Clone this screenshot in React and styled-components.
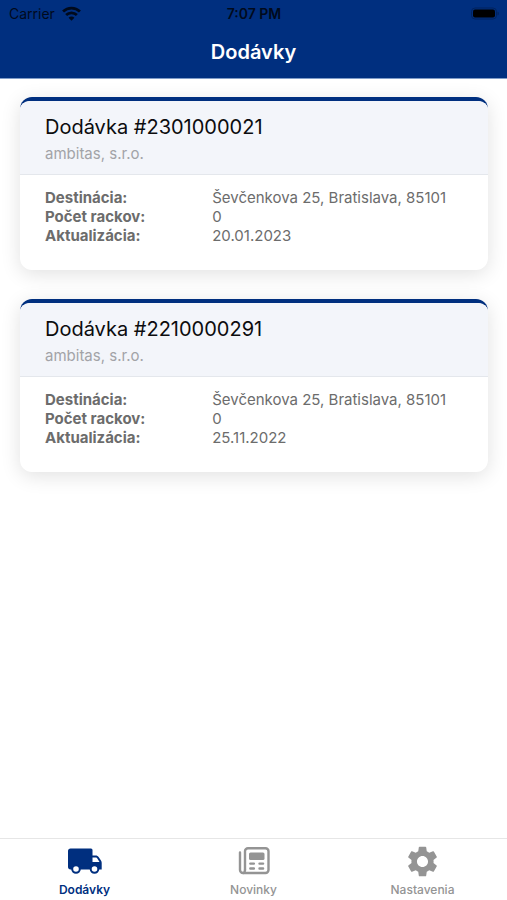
import styled, { createGlobalStyle } from "styled-components"
import { MdSettings } from "react-icons/md"


const GlobalStyle = createGlobalStyle`
    * {
        box-sizing: border-box;
    }
    body {
        margin: 0;
        background-color: #fff;
        font-family: Inter, "Liberation Sans", sans-serif;
    }
`

const Screen = styled.div`
    display: flex;
    flex-direction: column;
    min-height: 100vh;
`

const Header = styled.header`
    background-color: #002f7f;
    border-bottom: 1px solid #7f9cc8;
`

const StatusBar = styled.div`
    display: grid;
    grid-template-columns: 1fr auto 1fr;
    align-items: center;
    height: 27px;
    padding: 0 8px 0 9px;
    font-size: 14px;
    color: #000a1c;
`

const Carrier = styled.div`
    display: flex;
    align-items: center;
    gap: 7px;
`

const Clock = styled.div`
    font-weight: 600;
`

const Battery = styled.svg`
    justify-self: end;
`

const Title = styled.h1`
    margin: 0;
    line-height: 51px;
    text-align: center;
    font-size: 20px;
    font-weight: 600;
    color: #fff;
`

const Deliveries = styled.main`
    flex: 1;
    display: flex;
    flex-direction: column;
    gap: 29px;
    padding: 18px 19px 29px 20px;
`

const Card = styled.article`
    border-top: 4px solid #002f7f;
    border-radius: 12px;
    background-color: #fff;
    box-shadow: 0 4px 20px rgba(0, 0, 0, 0.12);
`

const CardHeader = styled.div`
    padding: 12px 25px 11px;
    border-bottom: 1px solid #e4e7ec;
    border-radius: 9px 9px 0 0;
    background-color: #f3f5fa;
`

const CardTitle = styled.h2`
    margin: 0;
    line-height: 28px;
    font-size: 20px;
    font-weight: 400;
    color: #0c0c0e;
`

const Company = styled.p`
    margin: 0;
    padding-top: 3px;
    line-height: 19px;
    font-size: 15px;
    color: #a2a3a7;
`

const Details = styled.dl`
    display: grid;
    grid-template-columns: 40% 1fr;
    margin: 0;
    padding: 13px 25px 25px;
    font-size: 15px;
    line-height: 19px;
    color: #6c6c6c;

    dt {
        font-weight: 700;
    }
    dd {
        margin: 0;
    }
`

const TabBar = styled.nav`
    position: sticky;
    bottom: 0;
    display: grid;
    grid-template-columns: repeat(3, 1fr);
    border-top: 1px solid #e6e6e6;
    background-color: #fff;
`

const Tab = styled.a`
    display: flex;
    flex-direction: column;
    align-items: center;
    gap: 4px;
    padding: 5px 0 2px;
    font-size: 12px;
    line-height: 16px;
    font-weight: ${props => props.$active ? 600 : 500};
    color: ${props => props.$active ? "#002f7f" : "#949494"};
    text-decoration: none;
`

const TabIcon = styled.span`
    display: flex;
    align-items: center;
    height: 34px;
`

const deliveries = [
    { number: "2301000021", company: "ambitas, s.r.o.", destination: "Ševčenkova 25, Bratislava, 85101", racks: 0, updated: "20.01.2023" },
    { number: "2210000291", company: "ambitas, s.r.o.", destination: "Ševčenkova 25, Bratislava, 85101", racks: 0, updated: "25.11.2022" },
]

function WifiIcon(){
    return (
        <svg width="19" height="15" viewBox="0 0 18 14" fill="none" stroke="currentColor" strokeWidth="2.6" aria-hidden="true">
            <path d="M1 5.2a11.4 11.4 0 0 1 16 0" />
            <path d="M3.9 8.5a7.2 7.2 0 0 1 10.2 0" />
            <path d="M9 13.9 6.2 11a3.8 3.8 0 0 1 5.600 0z" fill="currentColor" stroke="none" />
        </svg>
    )
}

function BatteryIcon(){
    return (
        <Battery width="29" height="14" viewBox="0 0 29 14" aria-hidden="true">
            <rect x="1.500" y="1" width="25" height="11" rx="3.5" fill="none" stroke="#00235f" />
            <rect x="3" y="2.500" width="22" height="8" rx="2" fill="#000" />
            <path d="M27.500 4.500v4c.9-.3 1.300-1.100 1.300-2s-.4-1.700-1.300-2z" fill="#00235f" />
        </Battery>
    )
}

function TruckIcon(){
    return (
        <svg width="36" height="34" viewBox="0 0 36 34" fill="currentColor" aria-hidden="true">
            <path fillRule="evenodd" d="M3.5 4.500H24a1.500 1.500 0 0 1 1.500 1.500V11.500h3c1.500 0 2.500.6 3.300 1.700l2 3c.6.800.9 1.500.9 2.500V25.500H3.500C2 25.500 1 24.500 1 23V7C1 5.500 2 4.500 3.500 4.500zM25.500 13.500V18H32.500l-2-3.200c-.5-.9-1-1.300-2-1.300z" />
            <circle cx="9" cy="25" r="3.800" fill="#fff" stroke="currentColor" strokeWidth="2" />
            <circle cx="27.500" cy="25" r="3.800" fill="#fff" stroke="currentColor" strokeWidth="2" />
        </svg>
    )
}

function NewsIcon(){
    return (
        <svg width="34" height="34" viewBox="0 0 34 34" fill="none" stroke="currentColor" strokeWidth="2.4" strokeLinecap="round" strokeLinejoin="round" aria-hidden="true">
            <path d="M8 26V7.200a3 3 0 0 1 3-3H28.500a3 3 0 0 1 3 3V26a3 3 0 0 1-3 3H6a3 3 0 0 1-3-3V8.500" />
            <path d="M8 26c0 1.700-.6 2.600-1.500 3" />
            <rect x="12" y="8.500" width="15.500" height="7.500" rx="1.500" fill="currentColor" stroke="none" />
            <path d="M13.300 19.600h3.600M22.500 19.600h3.600M13.300 24.500h3.600M22.500 24.500h3.600" />
        </svg>
    )
}

function DeliveryCard({number, company, destination, racks, updated}){
    return (
        <Card>
            <CardHeader>
                <CardTitle>Dodávka #{number}</CardTitle>
                <Company>{company}</Company>
            </CardHeader>
            <Details>
                <dt>Destinácia:</dt>
                <dd>{destination}</dd>
                <dt>Počet rackov:</dt>
                <dd>{racks}</dd>
                <dt>Aktualizácia:</dt>
                <dd>{updated}</dd>
            </Details>
        </Card>
    )
}

export default function App(){
    return (
        <Screen>
            <GlobalStyle />
            <Header>
                <StatusBar>
                    <Carrier>Carrier <WifiIcon /></Carrier>
                    <Clock>7:07 PM</Clock>
                    <BatteryIcon />
                </StatusBar>
                <Title>Dodávky</Title>
            </Header>
            <Deliveries>
                {deliveries.map((delivery) => <DeliveryCard key={delivery.number} {...delivery} />)}
            </Deliveries>
            <TabBar>
                <Tab href="#dodavky" $active aria-current="page">
                    <TabIcon><TruckIcon /></TabIcon>
                    Dodávky
                </Tab>
                <Tab href="#novinky">
                    <TabIcon><NewsIcon /></TabIcon>
                    Novinky
                </Tab>
                <Tab href="#nastavenia">
                    <TabIcon><MdSettings size={37} aria-hidden="true" /></TabIcon>
                    Nastavenia
                </Tab>
            </TabBar>
        </Screen>
    )
}
